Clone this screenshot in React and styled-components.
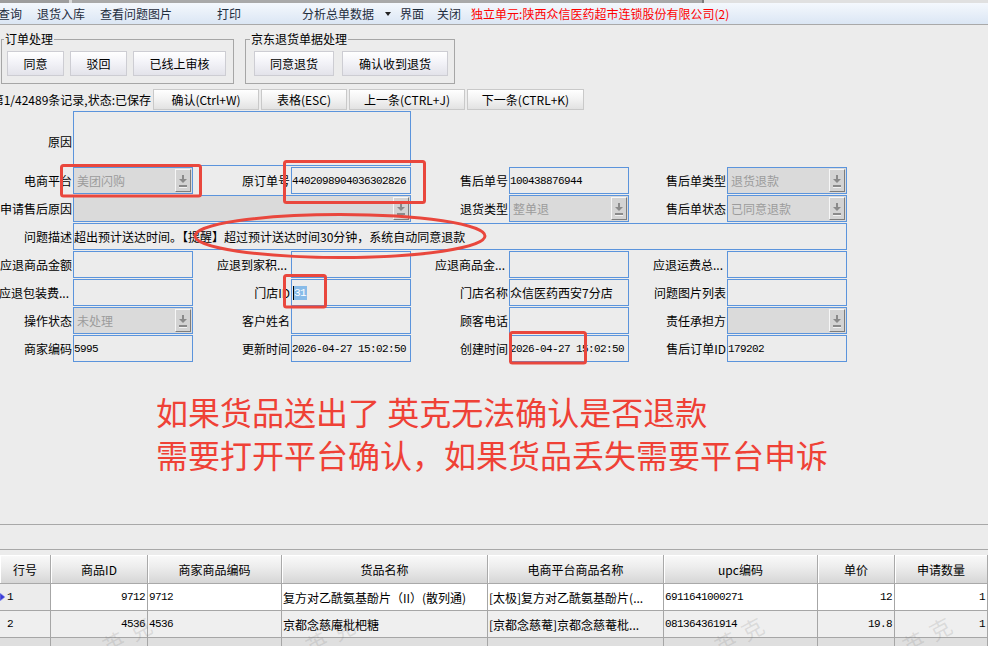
import React from "react";
import styled, { createGlobalStyle } from "styled-components";

const GlobalStyle = createGlobalStyle`
  html, body { margin: 0; padding: 0; background: #ececec; overflow: hidden; }
  body {
    font-family: "Noto Sans CJK SC", "Noto Sans", sans-serif;
    font-size: 12px;
    color: #000;
  }
  * { box-sizing: border-box; }
`;

const Page = styled.div`
  position: relative;
  width: 988px;
  height: 646px;
  overflow: hidden;
  display: flex;
  flex-direction: column;
  background: #ececec;
`;

const TopStrip = styled.div`
  display: flex;
  height: 3px;
  flex-shrink: 0;
  background: #e0e0e0;
`;

const StripSeg = styled.div`
  width: ${(p) => p.$w}px;
  background: ${(p) => p.$c};
`;

const MenuBar = styled.div`
  height: 22px;
  flex-shrink: 0;
  display: flex;
  align-items: center;
  background: linear-gradient(#f4f8fd, #dbe6f4);
  border-bottom: 1px solid #a9a9a9;
  white-space: nowrap;
`;

const MenuItem = styled.span`
  margin-left: ${(p) => p.$ml}px;
  color: ${(p) => (p.$red ? "#ff0000" : "#1f2d3d")};
  line-height: 14px;
  font-size: 12px;
`;

const MenuCaret = styled.svg`
  margin-left: ${(p) => p.$ml}px;
  width: 6px;
  height: 4px;
`;

const GroupRow = styled.div`
  display: flex;
  gap: 11px;
  padding: 7px 0 0 1px;
  flex-shrink: 0;
`;

const GroupBox = styled.fieldset`
  margin: 0;
  width: ${(p) => p.$w}px;
  height: 52px;
  padding: 5px 0 0 ${(p) => p.$pl}px;
  border: 1px solid #a6a6a6;
  display: flex;
  gap: ${(p) => p.$gap}px;
  align-items: flex-start;
`;

const Legend = styled.legend`
  padding: 0 1px;
  margin-left: ${(p) => p.$ml}px;
  line-height: 14px;
  font-size: 12px;
`;

const GroupButton = styled.button`
  width: ${(p) => p.$w}px;
  height: 25px;
  margin: 0;
  padding: 0;
  font-family: inherit;
  font-size: 12px;
  color: #000;
  border: 1px solid #cdcdd3;
  border-radius: 0;
  background: linear-gradient(#ffffff, #f3f3f8 45%, #e3e3ea);
`;

const Toolbar = styled.div`
  display: flex;
  height: 21px;
  margin-top: 5px;
  flex-shrink: 0;
  gap: 2px;
`;

const Status = styled.div`
  width: 151px;
  flex-shrink: 0;
  display: flex;
  justify-content: flex-end;
  align-items: center;
  overflow: hidden;
  white-space: nowrap;
`;

const StatusText = styled.span`
  flex-shrink: 0;
  font-size: 12px;
`;

const ToolButton = styled.button`
  width: ${(p) => p.$w}px;
  height: 21px;
  margin: 0;
  padding: 0;
  font-family: inherit;
  font-size: 12px;
  color: #000;
  border: 1px solid #c9c9c9;
  border-radius: 0;
  background: linear-gradient(#ffffff, #f2f2f2 50%, #e2e2e2);
`;

const Form = styled.div`
  display: flex;
  flex-direction: column;
  gap: 1px;
  margin: 1px 0 0 -25px;
  flex-shrink: 0;
`;

const FormRow = styled.div`
  display: grid;
  grid-template-columns: repeat(4, 98px 120px);
  height: ${(p) => (p.$tall ? 55 : 27)}px;
`;

const Label = styled.div`
  display: flex;
  align-items: center;
  justify-content: flex-end;
  padding-right: ${(p) => (p.$trunc ? 4 : 1)}px;
  padding-top: ${(p) => (p.$tall ? 5 : 0)}px;
  white-space: nowrap;
  font-size: 12px;
`;

const Field = styled.div`
  grid-column: span ${(p) => p.$span || 1};
  border: 1px solid #5b94dc;
  background: ${(p) => (p.$select ? "#dadada" : "#ececec")};
  display: flex;
  align-items: center;
  overflow: hidden;
  white-space: nowrap;
`;

const Value = styled.span`
  padding-left: ${(p) => (p.$select ? 3 : 0)}px;
  color: ${(p) => (p.$select ? "#9c9c9c" : "#000")};
  font-family: ${(p) =>
    p.$mono ? '"Liberation Mono", "DejaVu Sans Mono", monospace' : "inherit"};
  font-size: ${(p) => (p.$mono ? "11px" : "12px")};
  letter-spacing: ${(p) => (p.$mono ? "-0.6px" : "0")};
  white-space: nowrap;
`;

const Caret = styled.span`
  width: 1px;
  height: 14px;
  margin-left: 1px;
  background: #000;
`;

const Selected = styled.span`
  background: #88bbe8;
  color: #fff;
  font-family: "Liberation Mono", "DejaVu Sans Mono", monospace;
  font-size: 11px;
  letter-spacing: -0.6px;
  line-height: 14px;
  padding-right: 1px;
`;

const DropBtn = styled.span`
  margin-left: auto;
  margin-right: 1px;
  width: 16px;
  height: 23px;
  flex-shrink: 0;
  background: #d3d3d3;
  border-top: 1px solid #f6f6f6;
  border-left: 1px solid #f6f6f6;
  border-right: 1px solid #7d7d7d;
  border-bottom: 1px solid #7d7d7d;
  display: flex;
`;

const Note = styled.div`
  margin: 28px 0 0 156px;
  color: #ef4136;
  font-size: 32px;
  line-height: 43px;
  white-space: nowrap;
  flex-shrink: 0;
`;

const Spacer = styled.div`
  flex: 1;
`;

const Bottom = styled.div`
  position: relative;
  height: 122px;
  flex-shrink: 0;
  border-top: 1px solid #a8a8a8;
  overflow: hidden;
`;

const Band = styled.div`
  height: 25px;
  border-bottom: 1px solid #a8a8a8;
`;

const Table = styled.div`
  margin-top: 5px;
  display: grid;
  grid-template-columns: 51px 97px 134px 206px 176px 154px 77px 93px;
  grid-template-rows: 29px;
  grid-auto-rows: 27px;
`;

const HeadCell = styled.div`
  display: flex;
  align-items: center;
  justify-content: center;
  background: linear-gradient(#fafafa, #ececec 45%, #d6d6d6);
  border-right: 1px solid #a9a9a9;
  border-bottom: 1px solid #a9a9a9;
  box-shadow: inset 1px 0 0 #ffffff, inset 0 1px 0 #ffffff;
  font-size: 12px;
  white-space: nowrap;
`;

const Cell = styled.div`
  display: flex;
  align-items: center;
  justify-content: ${(p) => (p.$right ? "flex-end" : "flex-start")};
  padding: ${(p) => (p.$right ? "0 2px 0 0" : `0 0 0 ${p.$pl ?? 1}px`)};
  background: ${(p) => p.$bg};
  border-right: 1px solid #a6a6a6;
  border-bottom: 1px solid #a6a6a6;
  overflow: hidden;
  white-space: nowrap;
  font-family: ${(p) =>
    p.$mono ? '"Liberation Mono", "DejaVu Sans Mono", monospace' : "inherit"};
  font-size: ${(p) => (p.$mono ? "11px" : "12px")};
  letter-spacing: ${(p) => (p.$mono ? "-0.6px" : "0")};
`;

const RowMark = styled.svg`
  width: 7px;
  height: 8px;
  flex-shrink: 0;
`;

const Watermark = styled.span`
  position: absolute;
  left: ${(p) => p.$x}px;
  top: ${(p) => p.$y}px;
  font-size: 22px;
  letter-spacing: 8px;
  color: rgba(110, 110, 110, 0.16);
  transform: rotate(-28deg);
  pointer-events: none;
  white-space: nowrap;
`;

const Markup = styled.svg`
  position: absolute;
  left: 0;
  top: 0;
  width: 988px;
  height: 646px;
  pointer-events: none;
`;

const DropIcon = () => (
  <svg width="14" height="21" viewBox="0 0 14 21">
    <rect x="6" y="5" width="2" height="4" fill="#8a8a8a" />
    <polygon points="3,9 11,9 7,13" fill="#8a8a8a" />
    <rect x="3" y="15" width="8" height="2" fill="#8a8a8a" />
    <rect x="3" y="17" width="8" height="1" fill="#f2f2f2" />
  </svg>
);

const Select = ({ value, span }) => (
  <Field $select $span={span}>
    {value && <Value $select>{value}</Value>}
    <DropBtn>
      <DropIcon />
    </DropBtn>
  </Field>
);

const Text = ({ value, mono, span }) => (
  <Field $span={span}>{value && <Value $mono={mono}>{value}</Value>}</Field>
);

const headers = ["行号", "商品ID", "商家商品编码", "货品名称", "电商平台商品名称", "upc编码", "单价", "申请数量"];

const rows = [
  ["1", "9712", "9712", "复方对乙酰氨基酚片（II）(散列通)", "[太极]复方对乙酰氨基酚片(...", "6911641000271", "12", "1"],
  ["2", "4536", "4536", "京都念慈庵枇杷糖", "[京都念慈菴]京都念慈菴枇...", "081364361914", "19.8", "1"],
  ["", "", "", "", "", "", "", ""],
];

const colRight = [false, true, false, false, false, false, true, true];
const colMono = [true, true, true, false, false, true, true, true];

export default function App() {
  return (
    <Page>
      <GlobalStyle />
      <TopStrip>
        <StripSeg $w={69} $c="#9d9d9d" />
        <StripSeg $w={3} $c="#dadada" />
        <StripSeg $w={630} $c="#a9a9a9" />
        <StripSeg $w={2} $c="#7a7a7a" />
      </TopStrip>

      <MenuBar>
        <MenuItem $ml={-2}>查询</MenuItem>
        <MenuItem $ml={15}>退货入库</MenuItem>
        <MenuItem $ml={15}>查看问题图片</MenuItem>
        <MenuItem $ml={45}>打印</MenuItem>
        <MenuItem $ml={61}>分析总单数据</MenuItem>
        <MenuCaret $ml={11} viewBox="0 0 6 4">
          <polygon points="0,0 6,0 3,4" fill="#222" />
        </MenuCaret>
        <MenuItem $ml={9}>界面</MenuItem>
        <MenuItem $ml={13}>关闭</MenuItem>
        <MenuItem $ml={10} $red>
          独立单元:陕西众信医药超市连锁股份有限公司(2)
        </MenuItem>
      </MenuBar>

      <GroupRow>
        <GroupBox $w={233} $pl={5} $gap={6}>
          <Legend $ml={-3}>订单处理</Legend>
          <GroupButton $w={57}>同意</GroupButton>
          <GroupButton $w={57}>驳回</GroupButton>
          <GroupButton $w={93}>已线上审核</GroupButton>
        </GroupBox>
        <GroupBox $w={210} $pl={8} $gap={8}>
          <Legend $ml={-4}>京东退货单据处理</Legend>
          <GroupButton $w={80}>同意退货</GroupButton>
          <GroupButton $w={106}>确认收到退货</GroupButton>
        </GroupBox>
      </GroupRow>

      <Toolbar>
        <Status>
          <StatusText>第1/42489条记录,状态:已保存</StatusText>
        </Status>
        <ToolButton $w={106}>确认(Ctrl+W)</ToolButton>
        <ToolButton $w={86}>表格(ESC)</ToolButton>
        <ToolButton $w={116}>上一条(CTRL+J)</ToolButton>
        <ToolButton $w={117}>下一条(CTRL+K)</ToolButton>
      </Toolbar>

      <Form>
        <FormRow $tall>
          <Label $tall>原因</Label>
          <Text span={3} />
        </FormRow>
        <FormRow>
          <Label>电商平台</Label>
          <Select value="美团闪购" />
          <Label>原订单号</Label>
          <Text value="4402098904036302826" mono />
          <Label>售后单号</Label>
          <Text value="100438876944" mono />
          <Label>售后单类型</Label>
          <Select value="退货退款" />
        </FormRow>
        <FormRow>
          <Label>申请售后原因</Label>
          <Select span={3} />
          <Label>退货类型</Label>
          <Select value="整单退" />
          <Label>售后单状态</Label>
          <Select value="已同意退款" />
        </FormRow>
        <FormRow>
          <Label>问题描述</Label>
          <Text span={7} value="超出预计送达时间。【提醒】超过预计送达时间30分钟，系统自动同意退款" />
        </FormRow>
        <FormRow>
          <Label>应退商品金额</Label>
          <Text />
          <Label $trunc>应退到家积...</Label>
          <Text />
          <Label $trunc>应退商品金...</Label>
          <Text />
          <Label $trunc>应退运费总...</Label>
          <Text />
        </FormRow>
        <FormRow>
          <Label $trunc>应退包装费...</Label>
          <Text />
          <Label>门店ID</Label>
          <Field>
            <Caret />
            <Selected>31</Selected>
          </Field>
          <Label>门店名称</Label>
          <Text value="众信医药西安7分店" />
          <Label>问题图片列表</Label>
          <Text />
        </FormRow>
        <FormRow>
          <Label>操作状态</Label>
          <Select value="未处理" />
          <Label>客户姓名</Label>
          <Text />
          <Label>顾客电话</Label>
          <Text />
          <Label>责任承担方</Label>
          <Select />
        </FormRow>
        <FormRow>
          <Label>商家编码</Label>
          <Text value="5995" mono />
          <Label>更新时间</Label>
          <Text value="2026-04-27 15:02:50" mono />
          <Label>创建时间</Label>
          <Text value="2026-04-27 15:02:50" mono />
          <Label>售后订单ID</Label>
          <Text value="179202" mono />
        </FormRow>
      </Form>

      <Note>
        <div>如果货品送出了 英克无法确认是否退款</div>
        <div>需要打开平台确认，如果货品丢失需要平台申诉</div>
      </Note>

      <Spacer />

      <Bottom>
        <Band />
        <Table>
          {headers.map((h) => (
            <HeadCell key={h}>{h}</HeadCell>
          ))}
          {rows.map((r, ri) =>
            r.map((v, ci) => {
              let bg = ri === 0 ? "#ffffff" : ri === 1 ? "#efefef" : "#dfdfdf";
              if (ri === 0 && ci === 0) bg = "#ececec";
              return (
                <Cell
                  key={`${ri}-${ci}`}
                  $bg={bg}
                  $right={colRight[ci]}
                  $mono={colMono[ci]}
                  $pl={ci === 0 ? (ri === 0 ? 0 : 7) : 1}
                >
                  {ri === 0 && ci === 0 && (
                    <RowMark viewBox="0 0 7 8">
                      <polygon points="0,0 5,4 0,8" fill="#3b3bd6" stroke="#9aa6f0" strokeWidth="0.6" />
                    </RowMark>
                  )}
                  {v}
                </Cell>
              );
            })
          )}
        </Table>
        <Watermark $x={100} $y={92}>英克</Watermark>
        <Watermark $x={303} $y={92}>英克</Watermark>
        <Watermark $x={712} $y={92}>英克</Watermark>
        <Watermark $x={900} $y={92}>英克</Watermark>
      </Bottom>

      <Markup viewBox="0 0 988 646">
        <g fill="none" stroke="#e9473d" strokeWidth="3">
          <rect x="61.5" y="165.5" width="139" height="30.5" rx="2" />
          <rect x="284.5" y="161.5" width="140" height="41" rx="2" />
          <ellipse cx="340" cy="236" rx="145" ry="21.5" />
          <rect x="284.5" y="275.5" width="41" height="31.5" rx="2" />
          <rect x="510.5" y="332.5" width="75" height="30.5" rx="2" />
        </g>
      </Markup>
    </Page>
  );
}
